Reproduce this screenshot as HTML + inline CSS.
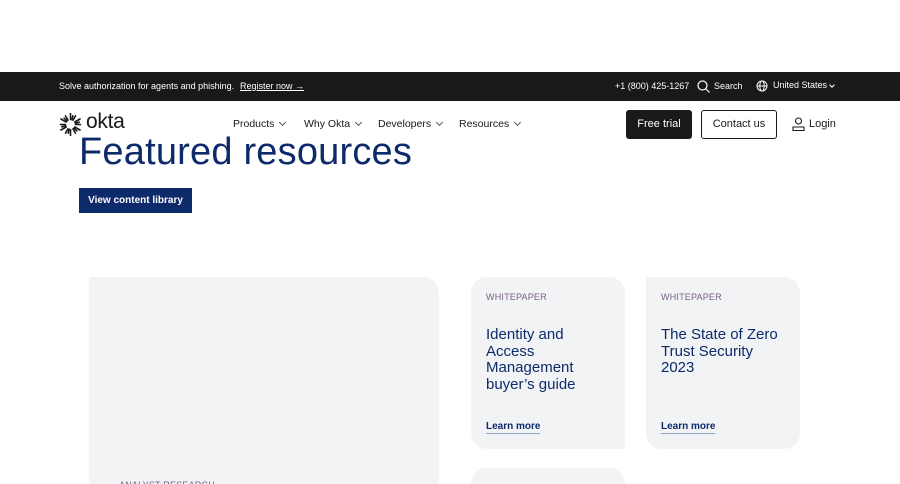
<!DOCTYPE html>
<html style="overflow:hidden;width:900px;height:484px"><head><meta charset="utf-8"><style>
*{margin:0;padding:0;box-sizing:border-box}
body{width:900px;height:484px;overflow:hidden;background:#fff;font-family:"Liberation Sans",sans-serif;position:relative}
.a{position:absolute}
.bar{left:0;top:72px;width:900px;height:29px;background:#191919;color:#fff;font-size:9px}
.bar span{position:absolute;top:9px;white-space:nowrap}
.nav{font-size:10.5px;color:#191919;top:118px;white-space:nowrap}
.chev{display:inline-block;width:5px;height:5px;border-right:1px solid #555;border-bottom:1px solid #555;transform:rotate(45deg);margin-left:6px;position:relative;top:-2px}
.card{background:#f1f3f5}
.tag{font-size:9px;color:#7a5f86;letter-spacing:.2px}
.ttl{font-size:15px;line-height:16.7px;color:#0d2a6b}
.lm{font-size:10px;font-weight:bold;color:#0d2a6b;border-bottom:1.5px solid #8ea3c7;padding-bottom:1px}
</style></head><body>
<div class="a bar">
<span style="left:59px">Solve authorization for agents and phishing.</span>
<span style="left:240px;text-decoration:underline">Register now →</span>
<span style="left:615px">+1 (800) 425-1267</span>
<svg class="a" style="left:697px;top:8px" width="13" height="13" viewBox="0 0 13 13"><circle cx="5.5" cy="5.5" r="4.5" fill="none" stroke="#fff" stroke-width="1.2"/><path d="M9 9l3.5 3.5" stroke="#fff" stroke-width="1.2"/></svg>
<span style="left:714px">Search</span>
<svg class="a" style="left:756px;top:8px" width="12" height="12" viewBox="0 0 12 12" fill="none" stroke="#fff" stroke-width="1"><circle cx="6" cy="6" r="5"/><ellipse cx="6" cy="6" rx="2.2" ry="5"/><path d="M1 6h10"/></svg>
<span style="left:773px;top:8px">United States</span>
<span style="left:830px;top:11px;width:4px;height:4px;border-right:1px solid #fff;border-bottom:1px solid #fff;transform:rotate(45deg)"></span>
</div>
<svg class="a" style="left:59px;top:113px" width="23" height="23" viewBox="-11.5 -11.5 23 23">
<g stroke="#191919" stroke-width="1.6" stroke-linecap="round">
<line x1="0" y1="-5" x2="0" y2="-11" transform="rotate(0)"/><line x1="0" y1="-5" x2="0" y2="-10" transform="rotate(30)"/><line x1="0" y1="-5" x2="0" y2="-11" transform="rotate(60)"/><line x1="0" y1="-5" x2="0" y2="-10" transform="rotate(90)"/><line x1="0" y1="-5" x2="0" y2="-11" transform="rotate(120)"/><line x1="0" y1="-5" x2="0" y2="-10" transform="rotate(150)"/><line x1="0" y1="-5" x2="0" y2="-11" transform="rotate(180)"/><line x1="0" y1="-5" x2="0" y2="-10" transform="rotate(210)"/><line x1="0" y1="-5" x2="0" y2="-11" transform="rotate(240)"/><line x1="0" y1="-5" x2="0" y2="-10" transform="rotate(270)"/><line x1="0" y1="-5" x2="0" y2="-11" transform="rotate(300)"/><line x1="0" y1="-5" x2="0" y2="-10" transform="rotate(330)"/>
<line x1="0" y1="-5" x2="0" y2="-9" transform="rotate(15)"/><line x1="0" y1="-5" x2="0" y2="-9" transform="rotate(75)"/><line x1="0" y1="-5" x2="0" y2="-9" transform="rotate(135)"/><line x1="0" y1="-5" x2="0" y2="-9" transform="rotate(195)"/><line x1="0" y1="-5" x2="0" y2="-9" transform="rotate(255)"/><line x1="0" y1="-5" x2="0" y2="-9" transform="rotate(315)"/>
</g></svg>
<div class="a" style="left:86px;top:110px;font-size:21px;color:#191919;letter-spacing:-.3px">okta</div>
<div class="a nav" style="left:233px">Products<span class="chev"></span></div>
<div class="a nav" style="left:304px">Why Okta<span class="chev"></span></div>
<div class="a nav" style="left:378px">Developers<span class="chev"></span></div>
<div class="a nav" style="left:459px">Resources<span class="chev"></span></div>
<div class="a" style="left:626px;top:110px;width:66px;height:29px;background:#191919;border-radius:3px;color:#fff;font-size:11px;text-align:center;line-height:29px">Free trial</div>
<div class="a" style="left:701px;top:110px;width:76px;height:29px;border:1.3px solid #191919;border-radius:3px;color:#191919;font-size:11px;text-align:center;line-height:27px">Contact us</div>
<svg class="a" style="left:792px;top:117px" width="13" height="14" viewBox="0 0 13 14" fill="none" stroke="#191919" stroke-width="1.1"><circle cx="6.5" cy="4" r="3"/><path d="M1 13.5v-3.5h11v3.5z"/></svg>
<div class="a nav" style="left:809px;font-size:11px">Login</div>
<div class="a" style="left:79px;top:128px;font-size:38px;color:#0d2a6b;line-height:48px;letter-spacing:.2px">Featured resources</div>
<div class="a" style="left:79px;top:188px;width:113px;height:25px;background:#0d2a6b;color:#fff;font-size:10px;font-weight:bold;text-align:center;line-height:25px">View content library</div>
<div class="a card" style="left:89px;top:277px;width:350px;height:220px;border-top-right-radius:16px"></div>
<div class="a tag" style="left:119px;top:480px">ANALYST RESEARCH</div>
<div class="a card" style="left:471px;top:277px;width:154px;height:172px;border-radius:16px 16px 0 16px"></div>
<div class="a tag" style="left:486px;top:292px">WHITEPAPER</div>
<div class="a ttl" style="left:486px;top:327px">Identity and<br>Access<br>Management<br>buyer’s guide</div>
<div class="a lm" style="left:486px;top:421px">Learn more</div>
<div class="a card" style="left:646px;top:277px;width:154px;height:172px;border-radius:0 16px 16px 16px"></div>
<div class="a tag" style="left:661px;top:292px">WHITEPAPER</div>
<div class="a ttl" style="left:661px;top:327px">The State of Zero<br>Trust Security<br>2023</div>
<div class="a lm" style="left:661px;top:421px">Learn more</div>
<div class="a card" style="left:471px;top:468px;width:154px;height:16px;border-radius:16px 16px 0 0"></div>
</body></html>
